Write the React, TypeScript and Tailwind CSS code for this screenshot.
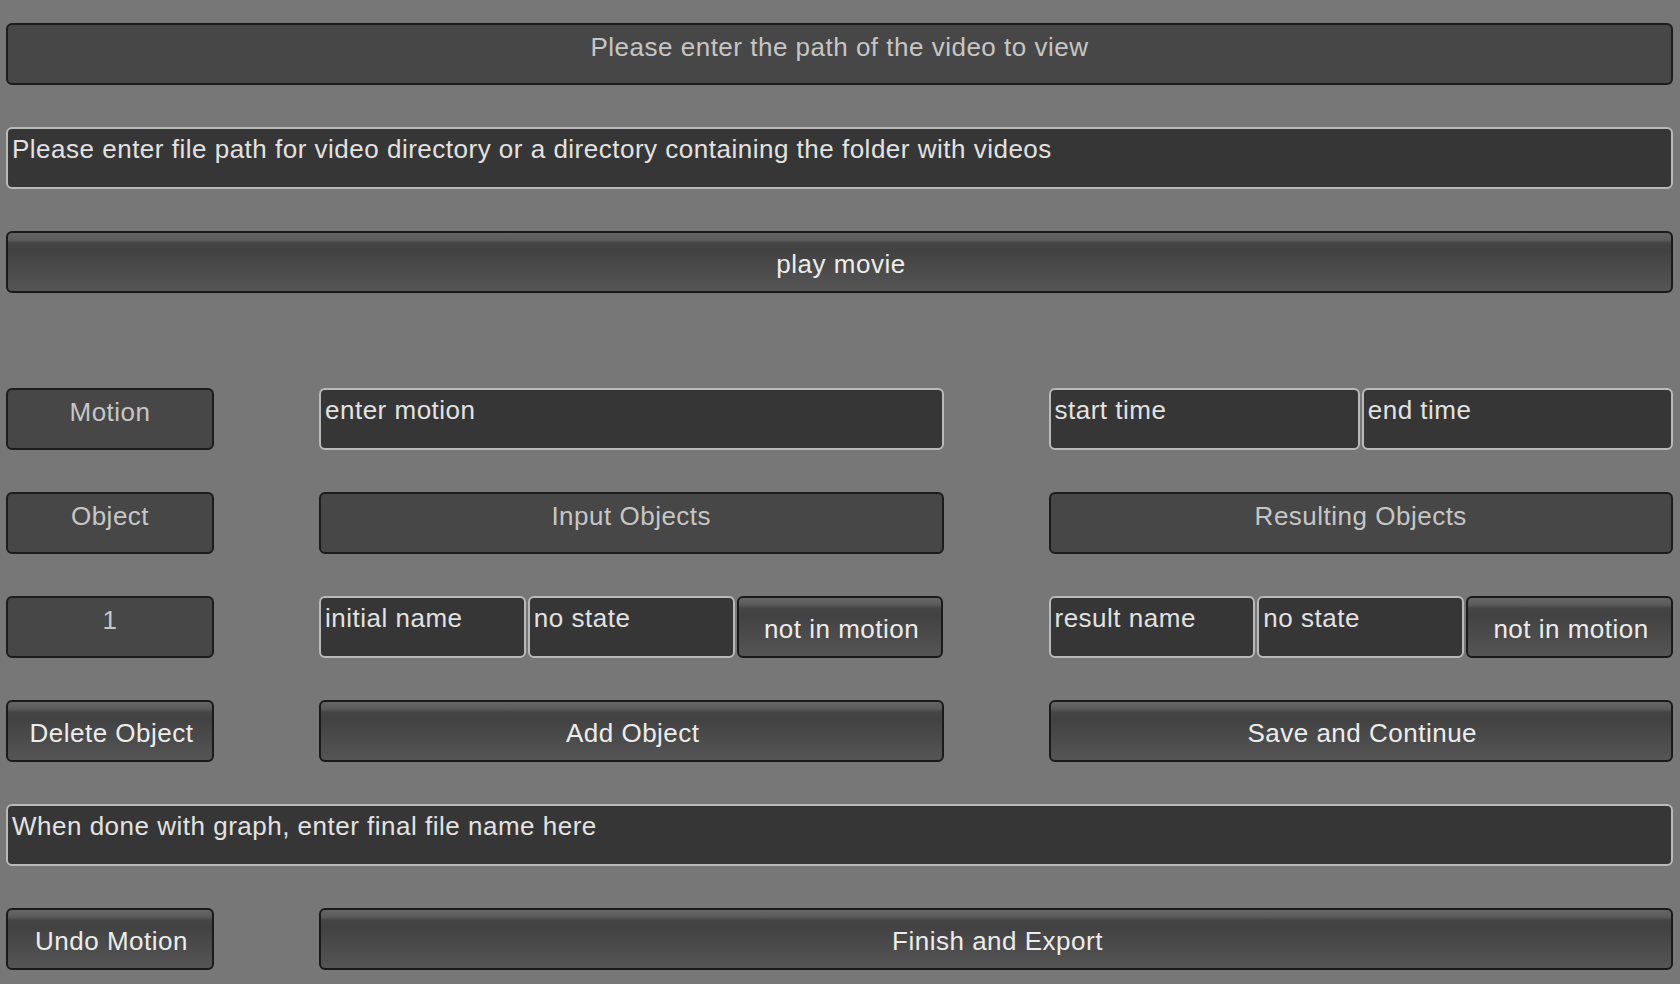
import React from "react";

const font = "font-['Liberation_Sans',Arial,sans-serif] text-[26px] leading-[26px] tracking-[0.5px] whitespace-nowrap overflow-hidden";

function Box({ children, className = "" }: { children: React.ReactNode; className?: string }) {
  return (
    <div
      className={`${font} h-[62px] rounded-[6px] border-2 border-[#1c1c1c] bg-[#474747] text-[#c6c6c6] flex justify-center items-start pt-[9px] ${className}`}
    >
      {children}
    </div>
  );
}

function Button({ children, className = "" }: { children: React.ReactNode; className?: string }) {
  return (
    <div
      className={`${font} h-[62px] rounded-[6px] border-2 border-[#1a1a1a] bg-[linear-gradient(to_bottom,#656565_0px,#5b5b5b_7px,#454545_10px,#424242_30%,#555555_100%)] text-[#ececec] flex justify-center items-start pt-[18px] pl-[3px] ${className}`}
    >
      {children}
    </div>
  );
}

function Field({ children, className = "" }: { children: React.ReactNode; className?: string }) {
  return (
    <div
      className={`${font} h-[62px] rounded-[6px] border-2 border-[#b9b9b9] bg-[#363636] text-[#e2e2e2] flex justify-start items-start pt-[7px] pl-[4px] ${className}`}
    >
      {children}
    </div>
  );
}

export default function App() {
  return (
    <div className="w-[1680px] h-[984px] bg-[#777777] overflow-hidden pl-[6px] pr-[7px] pt-[23px]">
      <div className="flex flex-col gap-[42px]">
        <Box>Please enter the path of the video to view</Box>
        <Field>Please enter file path for video directory or a directory containing the folder with videos</Field>
        <Button>play movie</Button>

        <div className="mt-[53px] grid grid-cols-[208px_1fr_1fr] gap-x-[105px] gap-y-[42px]">
          {/* Motion row */}
          <Box>Motion</Box>
          <Field>enter motion</Field>
          <div className="grid grid-cols-2 gap-[2px]">
            <Field>start time</Field>
            <Field>end time</Field>
          </div>

          {/* Object row */}
          <Box>Object</Box>
          <Box>Input Objects</Box>
          <Box>Resulting Objects</Box>

          {/* Object 1 row */}
          <Box>1</Box>
          <div className="grid grid-cols-3 gap-[2px]">
            <Field>initial name</Field>
            <Field>no state</Field>
            <Button>not in motion</Button>
          </div>
          <div className="grid grid-cols-3 gap-[2px]">
            <Field>result name</Field>
            <Field>no state</Field>
            <Button>not in motion</Button>
          </div>

          {/* Actions row */}
          <Button>Delete Object</Button>
          <Button>Add Object</Button>
          <Button>Save and Continue</Button>

          {/* Filename row */}
          <Field className="col-span-3">When done with graph, enter final file name here</Field>

          {/* Final row */}
          <Button>Undo Motion</Button>
          <Button className="col-span-2">Finish and Export</Button>
        </div>
      </div>
    </div>
  );
}
